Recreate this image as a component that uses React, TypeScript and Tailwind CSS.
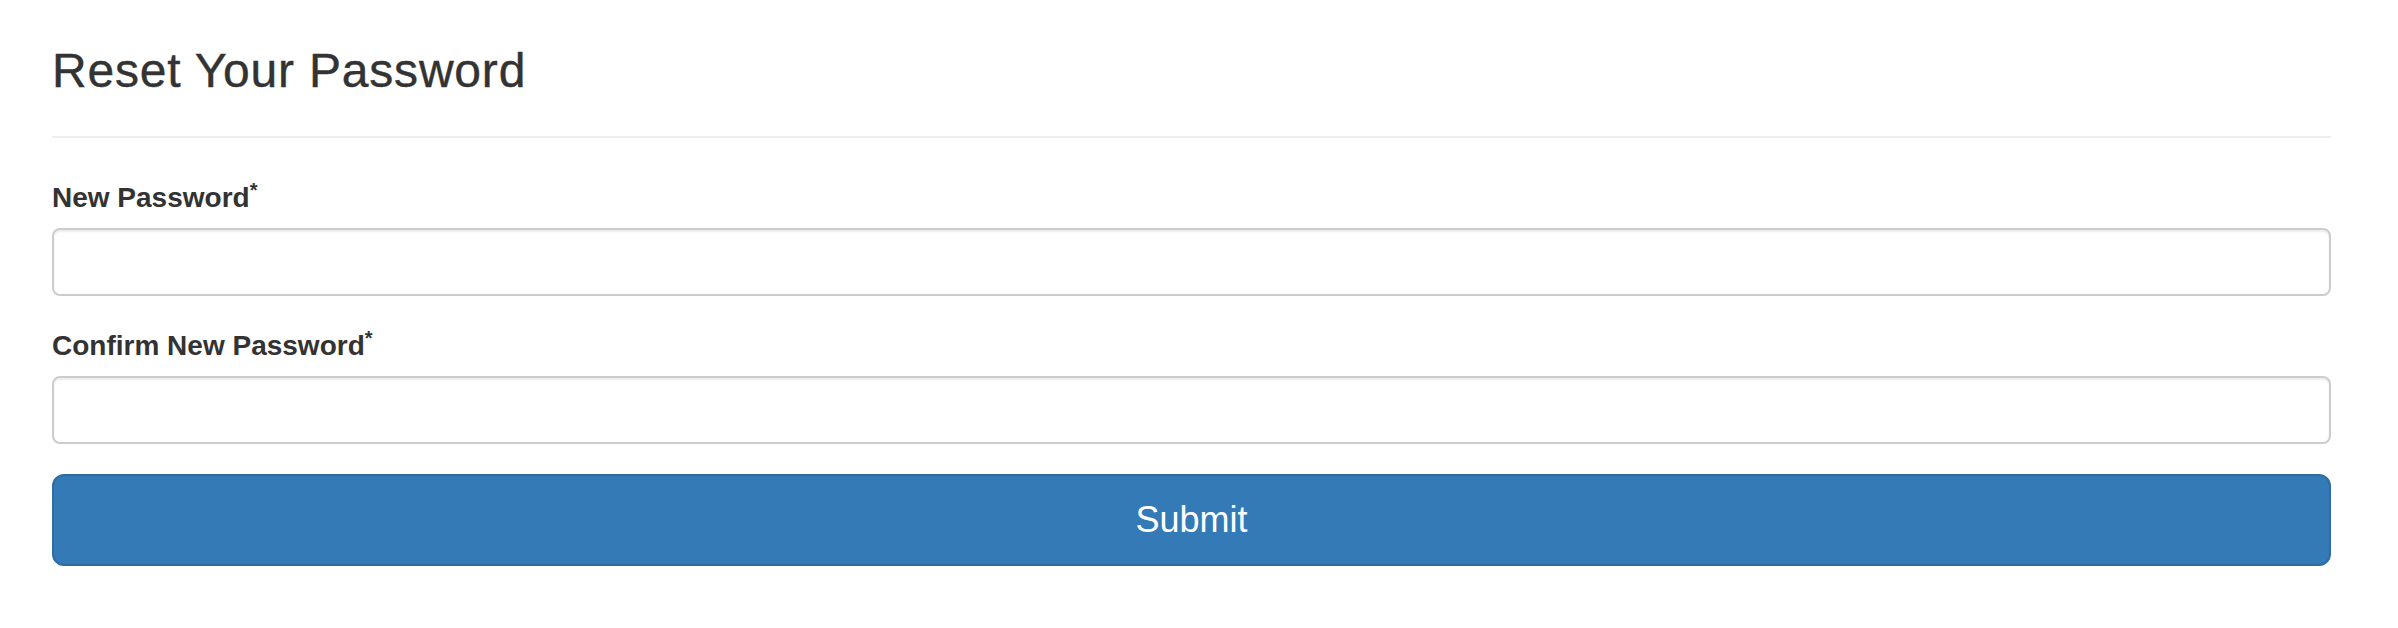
import React from "react";

const Field = ({ label, id }: { label: string; id: string }) => (
  <div className="mb-[30px]">
    <label
      htmlFor={id}
      className="block mb-[10px] text-[28px] leading-[40px] font-bold text-[#333]"
    >
      {label}
      <sup className="text-[20px] relative -top-[10px] align-baseline">*</sup>
    </label>
    <input
      id={id}
      type="password"
      className="block w-full h-[68px] px-[24px] text-[28px] bg-white border-2 border-[#ccc] rounded-[8px] shadow-[inset_0_2px_2px_rgba(0,0,0,0.075)] outline-none"
    />
  </div>
);

export default function App() {
  return (
    <div
      className="min-h-screen bg-white pl-[52px] pt-[45px]"
      style={{ fontFamily: '"Liberation Sans", Arial, sans-serif' }}
    >
      <div className="w-[2279px]">
        {/* Page header */}
        <div className="pb-[18px] mb-[40px] border-b-2 border-[#eee]">
          <h3 className="text-[48px] leading-[52.8px] font-normal tracking-[0.8px] text-[#333] mb-[20px] [-webkit-text-stroke:0.4px_#333]">
            Reset Your Password
          </h3>
        </div>

        <form onSubmit={(e) => e.preventDefault()}>
          <Field label="New Password" id="new-password" />
          <Field label="Confirm New Password" id="confirm-password" />
          <button
            type="submit"
            className="block w-full h-[92px] text-[36px] text-white bg-[#337ab7] border-2 border-[#2e6da4] rounded-[12px]"
          >
            Submit
          </button>
        </form>
      </div>
    </div>
  );
}
